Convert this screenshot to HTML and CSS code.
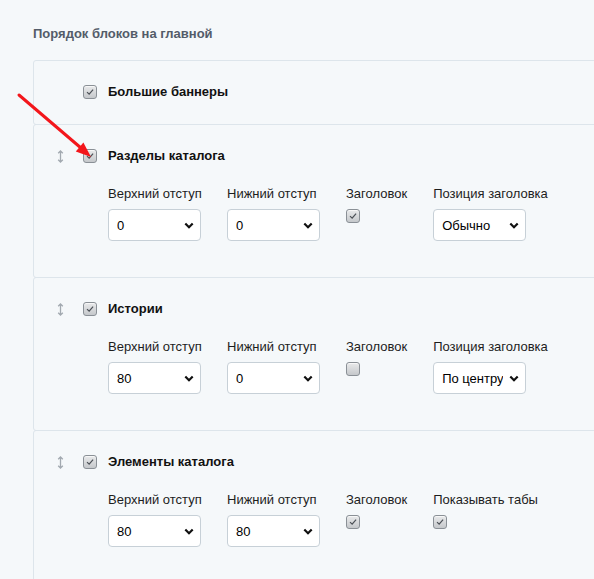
FILE: index.html
```html
<!DOCTYPE html>
<html lang="ru">
<head>
  <meta charset="UTF-8">
  <title>Порядок блоков на главной</title>
  <link rel="stylesheet" href="styles.css">
</head>
<body>
  <div class="page">
    <h2 class="section-title">Порядок блоков на главной</h2>

    <div class="blocks">
      <div class="block">
        <div class="block-head">
          <span class="handle handle-empty"></span>
          <span class="check checked">
            <svg viewBox="0 0 14 14"><path d="M3.5 7.2 L6 9.6 L10.6 4.2" /></svg>
          </span>
          <span class="block-name">Большие баннеры</span>
        </div>
      </div>

      <div class="block">
        <div class="block-head">
          <span class="handle">
            <svg viewBox="0 0 7 13"><path d="M3.5 1 V12 M1.2 3.3 L3.5 1 L5.8 3.3 M1.2 9.7 L3.5 12 L5.8 9.7" /></svg>
          </span>
          <span class="check checked">
            <svg viewBox="0 0 14 14"><path d="M3.5 7.2 L6 9.6 L10.6 4.2" /></svg>
          </span>
          <span class="block-name">Разделы каталога</span>
        </div>
        <div class="fields">
          <label class="field field-select">
            <span class="field-label">Верхний отступ</span>
            <select class="select"><option>0</option></select>
          </label>
          <label class="field field-select">
            <span class="field-label">Нижний отступ</span>
            <select class="select"><option>0</option></select>
          </label>
          <div class="field">
            <span class="field-label">Заголовок</span>
            <span class="check checked">
              <svg viewBox="0 0 14 14"><path d="M3.5 7.2 L6 9.6 L10.6 4.2" /></svg>
            </span>
          </div>
          <label class="field field-select">
            <span class="field-label">Позиция заголовка</span>
            <select class="select"><option>Обычно</option></select>
          </label>
        </div>
      </div>

      <div class="block">
        <div class="block-head">
          <span class="handle">
            <svg viewBox="0 0 7 13"><path d="M3.5 1 V12 M1.2 3.3 L3.5 1 L5.8 3.3 M1.2 9.7 L3.5 12 L5.8 9.7" /></svg>
          </span>
          <span class="check checked">
            <svg viewBox="0 0 14 14"><path d="M3.5 7.2 L6 9.6 L10.6 4.2" /></svg>
          </span>
          <span class="block-name">Истории</span>
        </div>
        <div class="fields">
          <label class="field field-select">
            <span class="field-label">Верхний отступ</span>
            <select class="select"><option>80</option></select>
          </label>
          <label class="field field-select">
            <span class="field-label">Нижний отступ</span>
            <select class="select"><option>0</option></select>
          </label>
          <div class="field">
            <span class="field-label">Заголовок</span>
            <span class="check"></span>
          </div>
          <label class="field field-select">
            <span class="field-label">Позиция заголовка</span>
            <select class="select"><option>По центру</option></select>
          </label>
        </div>
      </div>

      <div class="block">
        <div class="block-head">
          <span class="handle">
            <svg viewBox="0 0 7 13"><path d="M3.5 1 V12 M1.2 3.3 L3.5 1 L5.8 3.3 M1.2 9.7 L3.5 12 L5.8 9.7" /></svg>
          </span>
          <span class="check checked">
            <svg viewBox="0 0 14 14"><path d="M3.5 7.2 L6 9.6 L10.6 4.2" /></svg>
          </span>
          <span class="block-name">Элементы каталога</span>
        </div>
        <div class="fields">
          <label class="field field-select">
            <span class="field-label">Верхний отступ</span>
            <select class="select"><option>80</option></select>
          </label>
          <label class="field field-select">
            <span class="field-label">Нижний отступ</span>
            <select class="select"><option>80</option></select>
          </label>
          <div class="field">
            <span class="field-label">Заголовок</span>
            <span class="check checked">
              <svg viewBox="0 0 14 14"><path d="M3.5 7.2 L6 9.6 L10.6 4.2" /></svg>
            </span>
          </div>
          <div class="field">
            <span class="field-label">Показывать табы</span>
            <span class="check checked">
              <svg viewBox="0 0 14 14"><path d="M3.5 7.2 L6 9.6 L10.6 4.2" /></svg>
            </span>
          </div>
        </div>
      </div>
    </div>
  </div>

  <!-- pointer drawn over the sections checkbox -->
  <svg class="pointer" width="594" height="579" viewBox="0 0 594 579">
    <line x1="19" y1="95" x2="81" y2="148" stroke="#f3161b" stroke-width="3" stroke-linecap="round" />
    <polygon points="91,157 75.8,151.6 83.4,142.6" fill="#f3161b" />
  </svg>
</body>
</html>
```

FILE: styles.css
```css
* {
  margin: 0;
  padding: 0;
  box-sizing: border-box;
}

:root {
  --bg: #f5f8fa;
  --border: #dde5eb;
  --title: #535c69;
  --text: #1d1d1d;
  --select-border: #c7d0d7;
}

html, body {
  height: 100%;
  overflow: hidden;
}

body {
  background-color: var(--bg);
  font-family: "Liberation Sans", Arial, sans-serif;
  font-size: 13px;
  line-height: 16px;
  color: var(--text);
}

.page {
  padding: 26px 0 0 33px;
}

.section-title {
  font-size: 13px;
  line-height: 16px;
  font-weight: bold;
  color: var(--title);
  margin-bottom: 18px;
}

.blocks {
  width: 720px;
}

.block {
  border: 1px solid var(--border);
  border-radius: 3px;
  padding: 23px 20px 24px 20px;
  margin-bottom: -1px;
}

.block-head {
  display: flex;
  align-items: center;
  height: 16px;
}

.handle {
  width: 12px;
  height: 16px;
  margin-right: 17px;
  display: flex;
  align-items: center;
  justify-content: center;
}

.handle svg {
  width: 7px;
  height: 13px;
  fill: none;
  stroke: #a2a9b0;
  stroke-width: 1.3;
}

.check {
  width: 14px;
  height: 14px;
  flex-shrink: 0;
  display: block;
  border: 1px solid #8a9096;
  border-radius: 3px;
  background: linear-gradient(#e9eaeb, #c5c8cb);
  box-shadow: inset 0 1px 0 #f7f7f7;
}

.check svg {
  display: block;
  width: 12px;
  height: 12px;
  fill: none;
  stroke: #4c5157;
  stroke-width: 1.4;
}

.block-name {
  margin-left: 11px;
  font-weight: bold;
  color: #111;
}

.fields {
  display: flex;
  gap: 26px;
  margin: 22px 0 12px 54px;
}

.field {
  display: flex;
  flex-direction: column;
  align-items: flex-start;
}

.field-label {
  margin-bottom: 7px;
  white-space: nowrap;
}

.field-select {
  width: 93px;
}

.select {
  appearance: none;
  -webkit-appearance: none;
  width: 93px;
  height: 32px;
  padding: 0 22px 0 8px;
  border: 1px solid var(--select-border);
  border-radius: 4px;
  background-color: #fff;
  background-image: url("data:image/svg+xml,%3Csvg xmlns='http://www.w3.org/2000/svg' width='10' height='7' viewBox='0 0 10 7'%3E%3Cpath d='M1.3 1.5 L5 5.2 L8.7 1.5' fill='none' stroke='%23111' stroke-width='2.2'/%3E%3C/svg%3E");
  background-repeat: no-repeat;
  background-position: right 6px center;
  font-family: inherit;
  font-size: 13px;
  color: #000;
  outline: none;
}

.pointer {
  position: absolute;
  left: 0;
  top: 0;
  pointer-events: none;
}
```
